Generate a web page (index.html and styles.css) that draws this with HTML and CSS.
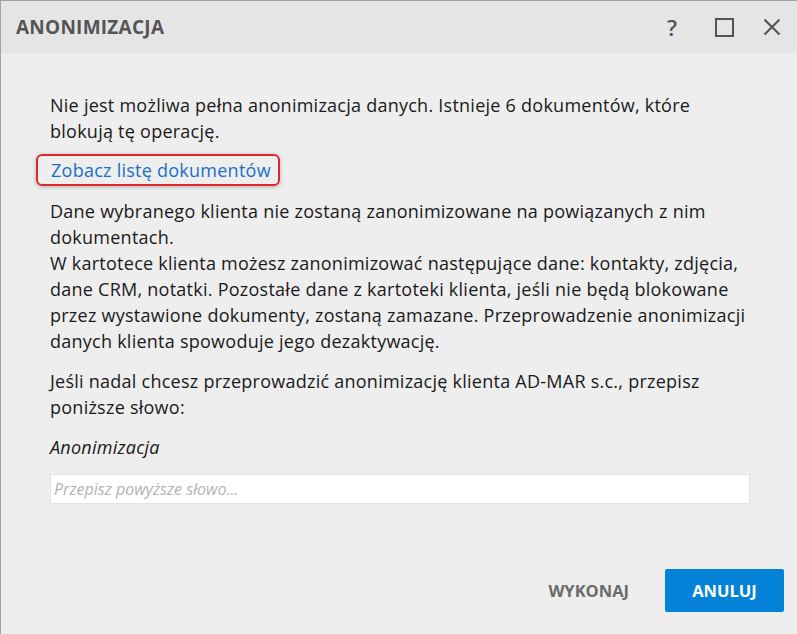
FILE: index.html
```html
<!DOCTYPE html>
<html lang="pl">
<head>
    <meta charset="UTF-8">
    <title>Anonimizacja</title>
    <link rel="stylesheet" href="styles.css">
</head>
<body>
    <div class="dialog">
        <header class="dialog-header">
            <h1>ANONIMIZACJA</h1>
            <div class="header-actions">
                <button class="icon-btn help">?</button>
                <button class="icon-btn">
                    <svg width="19" height="19" viewBox="0 0 19 19"><rect x="1" y="1" width="17" height="17" fill="none" stroke="#555" stroke-width="2"/></svg>
                </button>
                <button class="icon-btn">
                    <svg width="18" height="18" viewBox="0 0 18 18"><path d="M1.5 1.5 L16.5 16.5 M16.5 1.5 L1.5 16.5" stroke="#555" stroke-width="2.2"/></svg>
                </button>
            </div>
        </header>

        <div class="dialog-body">
            <p>Nie jest możliwa pełna anonimizacja danych. Istnieje 6 dokumentów, które<br>blokują tę operację.</p>

            <div class="link-row">
                <a href="#" class="doc-link">Zobacz listę dokumentów</a>
            </div>

            <p>Dane wybranego klienta nie zostaną zanonimizowane na powiązanych z nim<br>dokumentach.<br>W kartotece klienta możesz zanonimizować następujące dane: kontakty, zdjęcia,<br>dane CRM, notatki. Pozostałe dane z kartoteki klienta, jeśli nie będą blokowane<br>przez wystawione dokumenty, zostaną zamazane. Przeprowadzenie anonimizacji<br>danych klienta spowoduje jego dezaktywację.</p>

            <p>Jeśli nadal chcesz przeprowadzić anonimizację klienta AD-MAR s.c., przepisz<br>poniższe słowo:</p>

            <p class="keyword">Anonimizacja</p>

            <input type="text" class="confirm-input" placeholder="Przepisz powyższe słowo...">
        </div>

        <footer class="dialog-footer">
            <button class="btn btn-flat">WYKONAJ</button>
            <button class="btn btn-primary">ANULUJ</button>
        </footer>
    </div>
</body>
</html>
```
FILE: styles.css
```css
* {
    margin: 0;
    padding: 0;
    box-sizing: border-box;
}

body {
    font-family: 'Open Sans', 'Noto Sans', sans-serif;
    background: #eeeeee;
    color: #1a1a1a;
    width: 797px;
    height: 634px;
    overflow: hidden;
}

.dialog {
    height: 634px;
    border-top: 1px solid #a3a3a3;
    border-left: 1px solid #a3a3a3;
    display: flex;
    flex-direction: column;
}

.dialog-header {
    height: 52px;
    background: #e5e5e5;
    display: flex;
    align-items: center;
    justify-content: space-between;
    padding: 0 15px 0 15px;
}

.dialog-header h1 {
    font-size: 19px;
    font-weight: 700;
    color: #555;
    letter-spacing: 0.25px;
}

.header-actions {
    display: flex;
    gap: 28px;
    align-items: center;
}

.icon-btn {
    width: 20px;
    height: 22px;
    border: none;
    background: none;
    display: flex;
    align-items: center;
    justify-content: center;
    color: #555;
}

.icon-btn.help {
    font-family: 'Open Sans', sans-serif;
    font-size: 22px;
    font-weight: 600;
    margin-right: 4px;
}

.dialog-body {
    padding: 39px 47px 0 49px;
    flex: 1;
}

.dialog-body p {
    font-size: 18px;
    line-height: 26px;
    white-space: nowrap;
    letter-spacing: 0.25px;
    margin-bottom: 14px;
}

.link-row {
    margin: -4px 0 12px -14px;
}

.doc-link {
    display: inline-block;
    font-size: 18px;
    line-height: 26px;
    letter-spacing: 0.25px;
    color: #1a70c4;
    text-decoration: none;
    padding: 1px 7px 1px 13px;
    border: 2px solid #e0262b;
    border-radius: 6px;
    box-shadow: 0 1px 4px rgba(0,0,0,0.25);
}

.dialog-body p.keyword {
    font-style: italic;
    margin-bottom: 14px;
}

.confirm-input {
    width: 700px;
    height: 30px;
    border: 1px solid #e4e4e4;
    background: #fff;
    font-family: inherit;
    font-size: 16px;
    padding: 0 3px;
}

.confirm-input::placeholder {
    color: #b3b3b3;
    font-style: italic;
}

.dialog-footer {
    display: flex;
    justify-content: flex-end;
    align-items: center;
    gap: 36px;
    padding: 0 13px 22px 0;
}

.btn {
    font-family: inherit;
    font-size: 16.5px;
    font-weight: 700;
    border: none;
    border-radius: 2px;
    cursor: pointer;
}

.btn-flat {
    background: none;
    color: #6b6b6b;
}

.btn-primary {
    background: #0382d8;
    color: #fff;
    width: 119px;
    height: 43px;
}
```
